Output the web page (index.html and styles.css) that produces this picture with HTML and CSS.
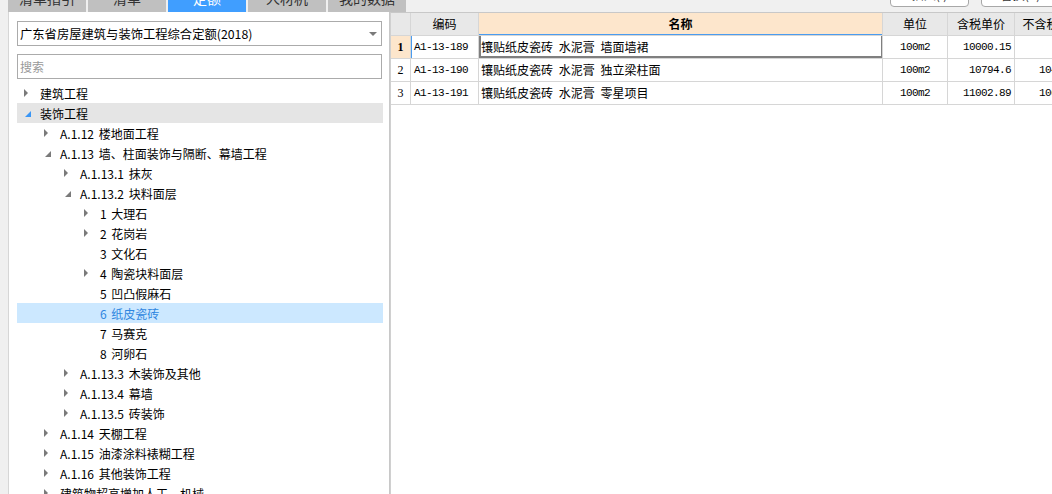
FILE: index.html
```html
<!DOCTYPE html>
<html lang="zh-CN">
<head>
<meta charset="utf-8">
<title>定额</title>
<link rel="stylesheet" href="styles.css">
</head>
<body>
<div class="app">
  <div class="topbar">
    <div class="tabs">
      <div class="tab">清单指引</div>
      <div class="tab">清单</div>
      <div class="tab active">定额</div>
      <div class="tab">人材机</div>
      <div class="tab">我的数据</div>
    </div>
    <div class="btns">
      <div class="btn">插入(I)</div>
      <div class="btn">替换(R)</div>
    </div>
  </div>
  <div class="main">
    <div class="left">
      <div class="select"><span>广东省房屋建筑与装饰工程综合定额(2018)</span><i class="caret"></i></div>
      <div class="search">搜索</div>
      <ul class="tree">
        <li class="row l0"><i class="tw"><b class="col"></b></i><span>建筑工程</span></li>
        <li class="row l0 hover"><i class="tw"><b class="exp blue"></b></i><span>装饰工程</span></li>
        <li class="row l1"><i class="tw"><b class="col"></b></i><span>A.1.12 楼地面工程</span></li>
        <li class="row l1"><i class="tw"><b class="exp"></b></i><span>A.1.13 墙、柱面装饰与隔断、幕墙工程</span></li>
        <li class="row l2"><i class="tw"><b class="col"></b></i><span>A.1.13.1 抹灰</span></li>
        <li class="row l2"><i class="tw"><b class="exp"></b></i><span>A.1.13.2 块料面层</span></li>
        <li class="row l3"><i class="tw"><b class="col"></b></i><span>1 大理石</span></li>
        <li class="row l3"><i class="tw"><b class="col"></b></i><span>2 花岗岩</span></li>
        <li class="row l3"><i class="tw"></i><span>3 文化石</span></li>
        <li class="row l3"><i class="tw"><b class="col"></b></i><span>4 陶瓷块料面层</span></li>
        <li class="row l3"><i class="tw"></i><span>5 凹凸假麻石</span></li>
        <li class="row l3 selected"><i class="tw"></i><span>6 纸皮瓷砖</span></li>
        <li class="row l3"><i class="tw"></i><span>7 马赛克</span></li>
        <li class="row l3"><i class="tw"></i><span>8 河卵石</span></li>
        <li class="row l2"><i class="tw"><b class="col"></b></i><span>A.1.13.3 木装饰及其他</span></li>
        <li class="row l2"><i class="tw"><b class="col"></b></i><span>A.1.13.4 幕墙</span></li>
        <li class="row l2"><i class="tw"><b class="col"></b></i><span>A.1.13.5 砖装饰</span></li>
        <li class="row l1"><i class="tw"><b class="col"></b></i><span>A.1.14 天棚工程</span></li>
        <li class="row l1"><i class="tw"><b class="col"></b></i><span>A.1.15 油漆涂料裱糊工程</span></li>
        <li class="row l1"><i class="tw"><b class="col"></b></i><span>A.1.16 其他装饰工程</span></li>
        <li class="row l1"><i class="tw"><b class="col"></b></i><span>建筑物超高增加人工、机械</span></li>
      </ul>
    </div>
    <div class="grid">
      <div class="cell hd num"></div>
      <div class="cell hd">编码</div>
      <div class="cell hd name-hd">名称</div>
      <div class="cell hd">单位</div>
      <div class="cell hd">含税单价</div>
      <div class="cell hd">不含税单价</div>

      <div class="cell num cur">1</div>
      <div class="cell code cur-code">A1-13-189</div>
      <div class="cell name sel">镶贴纸皮瓷砖 水泥膏 墙面墙裙</div>
      <div class="cell unit">100m2</div>
      <div class="cell price">10000.15</div>
      <div class="cell price"></div>

      <div class="cell num">2</div>
      <div class="cell code">A1-13-190</div>
      <div class="cell name">镶贴纸皮瓷砖 水泥膏 独立梁柱面</div>
      <div class="cell unit">100m2</div>
      <div class="cell price">10794.6</div>
      <div class="cell price">10451.73</div>

      <div class="cell num">3</div>
      <div class="cell code">A1-13-191</div>
      <div class="cell name">镶贴纸皮瓷砖 水泥膏 零星项目</div>
      <div class="cell unit">100m2</div>
      <div class="cell price">11002.89</div>
      <div class="cell price">10653.26</div>
    </div>
  </div>
</div>
</body>
</html>
```

FILE: styles.css
```css
* { box-sizing: border-box; }
html, body { margin: 0; padding: 0; }
body {
  width: 1052px;
  height: 494px;
  overflow: hidden;
  background: #f0f0f0;
  font-family: "Noto Sans CJK SC", "Noto Sans", sans-serif;
  font-size: 12px;
  color: #000;
}
.app { display: flex; flex-direction: column; height: 494px; }

.topbar {
  height: 12px;
  display: flex;
  overflow: hidden;
  flex: none;
}
.tabs { display: flex; gap: 2px; padding-left: 8px; }
.tab {
  width: 78px;
  height: 28px;
  margin-top: -16px;
  background: #c0c0c0;
  color: #333;
  font-size: 14px;
  line-height: 28px;
  text-align: center;
}
.tab.active { background: #409eff; color: #fff; }
.btns { display: flex; gap: 12px; margin-left: 484px; }
.btn {
  width: 79px;
  height: 24px;
  margin-top: -17px;
  background: #fff;
  border: 1px solid #a8a8a8;
  border-radius: 4px;
  font-size: 12px;
  line-height: 22px;
  text-align: center;
  color: #333;
  flex: none;
}

.main { display: flex; flex: 1; min-height: 0; }

.left {
  width: 382px;
  margin-left: 8px;
  background: #fff;
  border-left: 1px solid #d6d6d6;
  border-right: 1px solid #c8c8c8;
  padding: 9px 0 0 8px;
  flex: none;
  overflow: hidden;
}
.select {
  width: 365px;
  height: 25px;
  border: 1px solid #ababab;
  display: flex;
  align-items: center;
  padding-left: 2px;
  justify-content: space-between;
  padding-right: 4px;
  font-size: 12.3px;
}
.caret {
  width: 0; height: 0;
  border-left: 4px solid transparent;
  border-right: 4px solid transparent;
  border-top: 4px solid #7a7a7a;
}
.search {
  width: 365px;
  height: 25px;
  margin-top: 8px;
  border: 1px solid #ababab;
  padding-left: 2px;
  line-height: 23px;
  color: #999;
}
.tree { list-style: none; margin: 4px 0 0; padding: 0; width: 366px; }
.row {
  height: 20px;
  display: flex;
  align-items: center;
  white-space: nowrap;
  word-spacing: 2px;
}
.row.l0 { padding-left: 7px; }
.row.l1 { padding-left: 27px; }
.row.l2 { padding-left: 47px; }
.row.l3 { padding-left: 67px; }
.row.hover { background: #e5e5e5; }
.row.selected { background: #cce8ff; color: #2f86e0; }
.tw {
  width: 16px;
  height: 20px;
  display: flex;
  align-items: center;
  flex: none;
}
.col {
  width: 0; height: 0;
  border-left: 4px solid #7a7a7a;
  border-top: 4px solid transparent;
  border-bottom: 4px solid transparent;
}
.exp {
  width: 0; height: 0;
  margin-left: 1px;
  margin-top: 2px;
  border-right: 6px solid #7a7a7a;
  border-top: 6px solid transparent;
}
.exp.blue { border-right-color: #3a96f5; }

.grid {
  flex: 1;
  min-width: 0;
  background: #fff;
  border-top: 1px solid #c8c8c8;
  border-left: 1px solid #d0d0d0;
  display: grid;
  grid-template-columns: 20px 68px 404px 65px 67px 76px;
  grid-auto-rows: 23px;
  align-content: start;
  overflow: hidden;
}
.cell {
  border-right: 1px solid #d6d6d6;
  border-bottom: 1px solid #d6d6d6;
  height: 23px;
  line-height: 22px;
  white-space: nowrap;
  overflow: hidden;
  color: #000;
}
.hd { background: #e8e8e8; text-align: center; font-size: 12px; }
.name-hd { background: #fde6cc; font-weight: bold; box-shadow: inset 0 -1px 0 #4a9cf0; }
.num {
  background: #fff;
  text-align: center;
  font-family: "Liberation Serif", serif;
  font-size: 12px;
}
.hd.num { background: #e8e8e8; }
.num.cur { background: #fde6cc; font-weight: bold; }
.code {
  font-family: "Liberation Mono", monospace;
  font-size: 11px;
  letter-spacing: -0.6px;
  padding-left: 3px;
}
.cur-code { box-shadow: inset 1px 0 0 #4a9cf0; }
.name { padding-left: 2px; font-size: 12px; word-spacing: 3px; }
.name.sel {
  box-shadow: inset 2px 0 0 #7f7f7f, inset -1px 0 0 #7f7f7f, inset 0 -2px 0 #7f7f7f;
}
.unit {
  text-align: center;
  font-family: "Liberation Mono", monospace;
  font-size: 11px;
  letter-spacing: -0.6px;
}
.price {
  text-align: right;
  padding-right: 3px;
  font-family: "Liberation Mono", monospace;
  font-size: 11px;
  letter-spacing: -0.6px;
}
```
